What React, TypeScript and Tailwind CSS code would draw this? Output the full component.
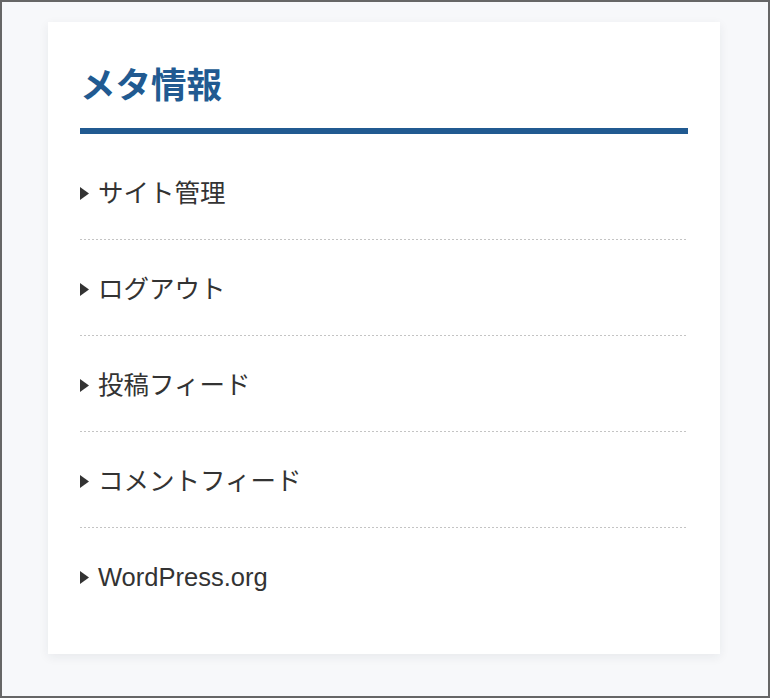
import React from 'react';

const metaLinks = [
  'サイト管理',
  'ログアウト',
  '投稿フィード',
  'コメントフィード',
  'WordPress.org',
];

function Caret() {
  return (
    <svg width="9" height="13" viewBox="0 0 9 13" className="shrink-0">
      <path d="M0 0 L9 6.5 L0 13 Z" fill="#333" />
    </svg>
  );
}

export default function App() {
  return (
    <div
      className="w-[770px] h-[698px] border-2 border-[#666] bg-[#f7f8fa] overflow-hidden"
      style={{ fontFamily: '"Liberation Sans", "Noto Sans CJK JP", sans-serif' }}
    >
      <aside className="ml-[46px] mt-[20px] w-[672px] bg-white px-8 pt-[38px] pb-[31px] shadow-[0_3px_10px_rgba(30,40,60,0.07)]">
        <h2 className="text-[35.5px] leading-[52px] font-bold text-[#215a91] pb-[16px] border-b-[6px] border-[#215a91]">
          メタ情報
        </h2>
        <ul className="mt-[10px]">
          {metaLinks.map((label, i) => (
            <li key={label}>
              <div className="h-[95px] pt-1 flex items-center gap-[9px] text-[25.5px] text-[#333]">
                <Caret />
                <a href="#" className="leading-none">{label}</a>
              </div>
              {i < metaLinks.length - 1 && (
                <div className="h-px bg-[repeating-linear-gradient(to_right,#c4c4c4_0_2px,transparent_2px_4px)]" />
              )}
            </li>
          ))}
        </ul>
      </aside>
    </div>
  );
}
